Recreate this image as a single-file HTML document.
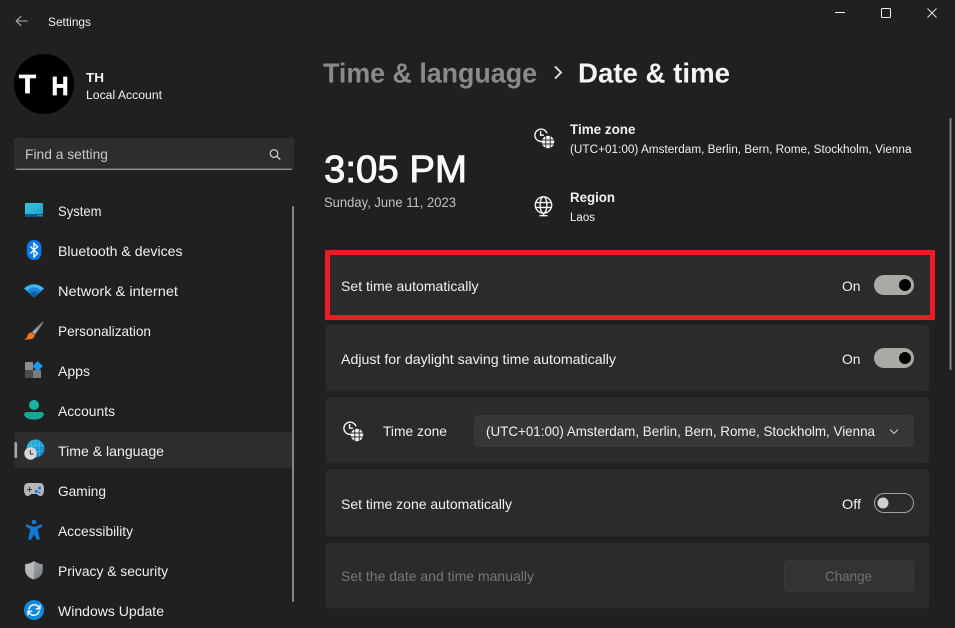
<!DOCTYPE html>
<html lang="en"><head><meta charset="utf-8"><title>Settings</title>
<style>
html,body{margin:0;padding:0;background:#202020;width:955px;height:628px;overflow:hidden}
svg{display:block;position:absolute;left:0;top:0}
text{font-family:"Liberation Sans",sans-serif;fill:#f0f0f0;font-size:14px}
</style></head><body>
<svg width="955" height="628" viewBox="0 0 955 628" xmlns="http://www.w3.org/2000/svg">
<defs>
<linearGradient id="sys" x1="0" y1="0" x2="1" y2="1"><stop offset="0" stop-color="#3cc6dd"/><stop offset="1" stop-color="#1a9ccf"/></linearGradient>
<linearGradient id="brush" x1="1" y1="0" x2="0" y2="1"><stop offset="0" stop-color="#6d6d72"/><stop offset="1" stop-color="#b8b8bc"/></linearGradient>
<linearGradient id="globe" x1="0" y1="0" x2="1" y2="1"><stop offset="0" stop-color="#2fc0d8"/><stop offset="1" stop-color="#0f78d4"/></linearGradient>
<linearGradient id="shield" x1="0" y1="0" x2="1" y2="1"><stop offset="0" stop-color="#b5b9bd"/><stop offset="1" stop-color="#74787c"/></linearGradient>
<g id="tzicon" fill="none" stroke="#f4f4f4" stroke-width="1.4">
<path d="M8 13.4A6.2 6.2 0 1 1 13 5.4"/><path d="M6.6 3V7.2H10"/>
<circle cx="14" cy="14" r="6.2" fill="#f4f4f4" stroke="none"/>
<path d="M8 12H20M8 16H20M11.8 8V20M16.2 8V20" stroke="#2a2a2a" stroke-width=".9"/>
</g>
</defs>

<rect width="955" height="628" fill="#202020"/>

<!-- title bar -->
<path d="M27.5 21H16.5M21.2 16.2L16.2 21L21.2 25.8" fill="none" stroke="#b0b0b0" stroke-width="1.1"/>
<text x="48" y="26" textLength="43" lengthAdjust="spacingAndGlyphs" style="font-size:12px">Settings</text>
<rect x="835" y="12" width="10" height="1" fill="#f0f0f0"/>
<rect x="881.5" y="8.5" width="9" height="9" rx="1" fill="none" stroke="#f0f0f0" stroke-width="1"/>
<path d="M927.5 8.5L936.5 17.5M936.5 8.5L927.5 17.5" stroke="#e0e0e0" stroke-width="1" fill="none"/>

<!-- profile -->
<circle cx="44" cy="84" r="30" fill="#000"/>
<text x="19" y="93" textLength="17" lengthAdjust="spacingAndGlyphs" style="font-size:26px;font-weight:700;fill:#fff;stroke:#fff;stroke-width:.7">T</text>
<text x="51.5" y="95" textLength="17" lengthAdjust="spacingAndGlyphs" style="font-size:26px;font-weight:700;fill:#fff;stroke:#fff;stroke-width:.7">H</text>
<text x="86" y="82" textLength="18" lengthAdjust="spacingAndGlyphs" style="font-size:13px;font-weight:700;fill:#f4f4f4">TH</text>
<text x="86" y="99" textLength="76" lengthAdjust="spacingAndGlyphs" style="font-size:11.5px">Local Account</text>

<!-- search -->
<rect x="14" y="138" width="280" height="32" rx="4" fill="#989898"/>
<path d="M18 138H290a4 4 0 0 1 4 4V168.6H14V142a4 4 0 0 1 4-4Z" fill="#2d2d2d"/>
<text x="25" y="159" textLength="83" lengthAdjust="spacingAndGlyphs" style="font-size:14px;fill:#c8c8c8">Find a setting</text>
<circle cx="274" cy="153.5" r="3.8" fill="none" stroke="#e0e0e0" stroke-width="1.1"/>
<path d="M276.8 156.3L280.3 159.6" stroke="#e0e0e0" stroke-width="1.2"/>

<!-- nav selection -->
<rect x="14" y="432" width="279" height="36" rx="4" fill="#2d2d2d"/>
<rect x="14.5" y="442" width="2.6" height="16" rx="1.3" fill="#a8a7a1"/>
<rect x="292" y="206" width="2" height="396" rx="1" fill="#858585"/>

<!-- nav text -->
<text x="58" y="216" textLength="43.5" lengthAdjust="spacingAndGlyphs">System</text>
<text x="58" y="256" textLength="124.5" lengthAdjust="spacingAndGlyphs">Bluetooth &amp; devices</text>
<text x="58" y="296" textLength="120" lengthAdjust="spacingAndGlyphs">Network &amp; internet</text>
<text x="58" y="336" textLength="93" lengthAdjust="spacingAndGlyphs">Personalization</text>
<text x="58" y="376" textLength="32" lengthAdjust="spacingAndGlyphs">Apps</text>
<text x="58" y="416" textLength="57" lengthAdjust="spacingAndGlyphs">Accounts</text>
<text x="58" y="456" textLength="106" lengthAdjust="spacingAndGlyphs">Time &amp; language</text>
<text x="58" y="496" textLength="48" lengthAdjust="spacingAndGlyphs">Gaming</text>
<text x="58" y="536" textLength="75" lengthAdjust="spacingAndGlyphs">Accessibility</text>
<text x="58" y="576" textLength="110" lengthAdjust="spacingAndGlyphs">Privacy &amp; security</text>
<text x="58" y="616" textLength="106" lengthAdjust="spacingAndGlyphs">Windows Update</text>

<!-- system icon -->
<rect x="25" y="203" width="18" height="14" rx="1" fill="url(#sys)"/>
<path d="M25 214H43V216a1 1 0 0 1-1 1H26a1 1 0 0 1-1-1Z" fill="#0f5c80"/>
<rect x="38" y="215" width="1" height="1" fill="#9bd"/><rect x="40.5" y="215" width="1" height="1" fill="#9bd"/>
<!-- bluetooth -->
<rect x="26.8" y="240" width="14.6" height="20" rx="7" fill="#0a78ea"/>
<path d="M30.2 246.4L37.6 253.4L33.9 257V243.2L37.6 246.6L30.2 253.6" fill="none" stroke="#fff" stroke-width="1.3"/>
<!-- wifi -->
<path d="M24 288.5A14 14 0 0 1 44 288.5L34 297.5Z" fill="#3fb4ee"/>
<path d="M27 290.5A10 10 0 0 1 41 290.5L34 297.5Z" fill="#1b86d8"/>
<path d="M30 293A6 6 0 0 1 38 293L34 297.5Z" fill="#0c5fae"/>
<!-- brush -->
<path d="M42.5 321.5Q43.6 321.5 43.4 323L35 334.5L32 332Z" fill="url(#brush)"/>
<path d="M31.5 332.2L35 335.2Q33.8 339 29.8 339.4L24.2 339.6Q27.5 337.5 27.8 335Q28.5 332.6 31.5 332.2Z" fill="#f0771f"/>
<!-- apps -->
<rect x="25" y="362" width="8" height="8" fill="#8b8d90"/>
<rect x="25" y="370" width="8" height="8" fill="#4a4c50"/>
<rect x="33" y="370" width="8" height="8" fill="#797b7e"/>
<path d="M37.6 361L42.8 366.2L37.6 371.4L32.4 366.2Z" fill="#1c97ee"/>
<!-- accounts -->
<circle cx="34" cy="405" r="5" fill="#19b3a2"/>
<path d="M27.4 412H40.6A3 3 0 0 1 44 414.5Q42.5 419.5 34 419.5Q25.5 419.5 24 414.5A3 3 0 0 1 27.4 412Z" fill="#17a795"/>
<!-- time -->
<circle cx="35.5" cy="448.5" r="9" fill="url(#globe)"/>
<path d="M27 445.5H44M27 451.5H44M35.5 439.6V457.4M31 441Q33 449 31 456M40 441Q38 449 40 456" stroke="#57c7e9" stroke-width=".6" fill="none"/>
<circle cx="30.5" cy="453.5" r="6.2" fill="#d8d8d8"/>
<path d="M30.3 450V454H33.5" stroke="#333" stroke-width="1" fill="none"/>
<!-- gaming -->
<path d="M28 483H40Q44 483 44 488.5Q44 496 40.5 496Q38.5 496 37 494H31Q29.5 496 27.5 496Q24 496 24 488.5Q24 483 28 483Z" fill="#b3b6ba"/>
<path d="M27 489.5H32M29.5 487V492" stroke="#3d3d3d" stroke-width="1"/>
<circle cx="36.3" cy="491.5" r="1.5" fill="#0f78d4"/><circle cx="39.5" cy="488" r="1.5" fill="#0f78d4"/><circle cx="39.5" cy="492.5" r="1" fill="#0f78d4"/>
<!-- accessibility -->
<circle cx="34" cy="522" r="2.3" fill="#0f7ad8"/>
<path d="M26.2 524.5L33 527H35L41.8 524.5L42 526.5L37.3 529L39.5 539.4L37.2 539.6L34 533.5L30.8 539.6L28.5 539.4L30.7 529L26 526.5Z" fill="#0f7ad8" stroke="#0f7ad8" stroke-width=".6"/>
<!-- shield -->
<path d="M34 561Q38 564 42.8 564.2V570Q42.5 577 34 579.5Q25.5 577 25.2 570V564.2Q30 564 34 561Z" fill="url(#shield)"/>
<path d="M34 561Q30 564 25.2 564.2V570Q25.5 577 34 579.5Z" fill="#c0c3c6" opacity=".7"/>
<!-- update -->
<circle cx="34" cy="610" r="10" fill="#1289dd"/>
<path d="M28.8 609.5A5.4 5.4 0 0 1 38.2 606.6L39.6 608.4M39.2 610.6A5.4 5.4 0 0 1 29.8 613.4L28.4 611.6" fill="none" stroke="#fff" stroke-width="1.4"/>
<path d="M40 604.6V608.8H35.8M28 615.4V611.2H32.2" fill="none" stroke="#fff" stroke-width="1.3"/>

<!-- header -->
<text x="323" y="82.5" textLength="214" lengthAdjust="spacingAndGlyphs" style="font-size:28px;font-weight:700;fill:#8a8a8a">Time &amp; language</text>
<path d="M555 66.5L561 72.5L555 78.5" fill="none" stroke="#e4e4e4" stroke-width="1.9"/>
<text x="578" y="82.5" textLength="152" lengthAdjust="spacingAndGlyphs" style="font-size:28px;font-weight:700;fill:#f4f4f4">Date &amp; time</text>

<!-- clock block -->
<text x="324" y="182" textLength="143" lengthAdjust="spacingAndGlyphs" style="font-size:38px;fill:#fafafa;stroke:#fafafa;stroke-width:.9">3:05 PM</text>
<text x="324" y="207" textLength="132" lengthAdjust="spacingAndGlyphs" style="font-size:14px;fill:#c2c2c2">Sunday, June 11, 2023</text>

<use href="#tzicon" x="534" y="128"/>
<text x="570" y="134" textLength="65.5" lengthAdjust="spacingAndGlyphs" style="font-size:13.5px;font-weight:700">Time zone</text>
<text x="570" y="153" textLength="341.5" lengthAdjust="spacingAndGlyphs" style="font-size:11.5px">(UTC+01:00) Amsterdam, Berlin, Bern, Rome, Stockholm, Vienna</text>

<g fill="none" stroke="#f4f4f4" stroke-width="1.4">
<circle cx="543.5" cy="205" r="8.2"/>
<ellipse cx="543.5" cy="205" rx="3.4" ry="8.2"/>
<path d="M536 202.6H551M536 207.4H551M543.5 213.2V215.5M539.5 215.7H547.5"/>
</g>
<text x="570" y="202" textLength="45" lengthAdjust="spacingAndGlyphs" style="font-size:13.5px;font-weight:700">Region</text>
<text x="570" y="221" textLength="25" lengthAdjust="spacingAndGlyphs" style="font-size:11.5px">Laos</text>

<!-- cards -->
<rect x="327.5" y="252.5" width="605" height="65" fill="#2b2b2b" stroke="#ed1c24" stroke-width="5"/>
<rect x="325" y="324" width="605" height="68" rx="4" fill="#2b2b2b" stroke="#1e1e1e"/>
<rect x="325" y="397" width="605" height="67" rx="4" fill="#2b2b2b" stroke="#1e1e1e"/>
<rect x="325" y="469" width="605" height="68" rx="4" fill="#2b2b2b" stroke="#1e1e1e"/>
<rect x="325" y="542" width="605" height="67" rx="4" fill="#2b2b2b" stroke="#1e1e1e"/>

<text x="341" y="291" textLength="137.5" lengthAdjust="spacingAndGlyphs">Set time automatically</text>
<text x="842" y="291" textLength="18.5" lengthAdjust="spacingAndGlyphs">On</text>
<rect x="874" y="275" width="40" height="20" rx="10" fill="#aaa9a3"/>
<circle cx="905" cy="285" r="6" fill="#000"/>

<text x="341" y="364" textLength="275" lengthAdjust="spacingAndGlyphs">Adjust for daylight saving time automatically</text>
<text x="842" y="364" textLength="18.5" lengthAdjust="spacingAndGlyphs">On</text>
<rect x="874" y="348" width="40" height="20" rx="10" fill="#aaa9a3"/>
<circle cx="905" cy="358" r="6" fill="#000"/>

<use href="#tzicon" x="343" y="421"/>
<text x="383" y="436" textLength="64" lengthAdjust="spacingAndGlyphs">Time zone</text>
<rect x="474" y="415" width="440" height="32" rx="4" fill="#373737"/>
<text x="486" y="436" textLength="389" lengthAdjust="spacingAndGlyphs">(UTC+01:00) Amsterdam, Berlin, Bern, Rome, Stockholm, Vienna</text>
<path d="M890 429.5L894 433.5L898 429.5" fill="none" stroke="#cfcfcf" stroke-width="1"/>

<text x="341" y="509" textLength="171" lengthAdjust="spacingAndGlyphs">Set time zone automatically</text>
<text x="842" y="509" textLength="19" lengthAdjust="spacingAndGlyphs">Off</text>
<rect x="874.5" y="493.5" width="39" height="19" rx="9.5" fill="none" stroke="#a0a0a0" stroke-width="1"/>
<circle cx="883" cy="503" r="5.5" fill="#cfcfcf"/>

<text x="341" y="581" textLength="193" lengthAdjust="spacingAndGlyphs" style="font-size:14px;fill:#777">Set the date and time manually</text>
<rect x="784.5" y="560.5" width="129" height="31" rx="4" fill="#333" stroke="#393939"/>
<text x="825" y="581" textLength="47" lengthAdjust="spacingAndGlyphs" style="font-size:14px;fill:#717171">Change</text>

<!-- main scrollbar -->
<rect x="949.5" y="118" width="2" height="252" rx="1" fill="#858585"/>
</svg>
</body></html>
